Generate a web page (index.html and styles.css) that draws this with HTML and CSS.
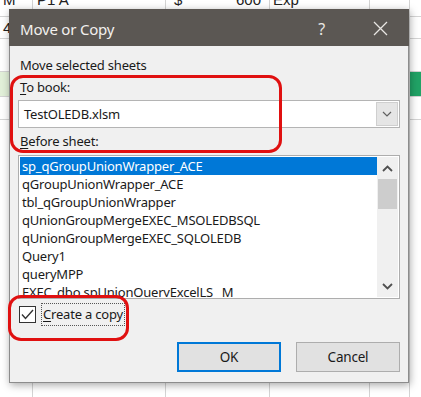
FILE: index.html
```html
<!DOCTYPE html>
<html lang="en">
<head>
    <meta charset="UTF-8">
    <title>Move or Copy</title>
    <link rel="stylesheet" href="styles.css">
</head>
<body>
    <div class="sheet">
        <div class="row row-first">
            <div class="cell c1">M</div>
            <div class="cell c2">P1 A</div>
            <div class="cell c3"><span>$</span><span>600</span></div>
            <div class="cell c4">Exp</div>
            <div class="cell c5"></div>
            <div class="cell c6"></div>
        </div>
        <div class="row row-2">
            <div class="cell c1">4-3</div>
            <div class="cell c2"></div>
            <div class="cell c3"></div>
            <div class="cell c4"></div>
            <div class="cell c5"></div>
            <div class="cell c6"></div>
        </div>
        <div class="row row-3">
            <div class="cell c1"></div>
            <div class="cell c2"></div>
            <div class="cell c3"></div>
            <div class="cell c4"></div>
            <div class="cell c5"></div>
            <div class="cell c6"></div>
        </div>
        <div class="row row-4">
            <div class="cell c1 green-light"></div>
            <div class="cell c2"></div>
            <div class="cell c3"></div>
            <div class="cell c4"></div>
            <div class="cell c5"></div>
            <div class="cell c6 green"></div>
        </div>
        <div class="row row-5">
            <div class="cell c1"></div>
            <div class="cell c2"></div>
            <div class="cell c3"></div>
            <div class="cell c4"></div>
            <div class="cell c5"></div>
            <div class="cell c6"></div>
        </div>
        <div class="row row-6">
            <div class="cell c1"></div>
            <div class="cell c2"></div>
            <div class="cell c3"></div>
            <div class="cell c4"></div>
            <div class="cell c5"></div>
            <div class="cell c6"></div>
        </div>
    </div>

    <div class="dialog">
        <div class="titlebar">
            <span class="title">Move or Copy</span>
            <span class="help">?</span>
            <svg class="close" width="15" height="15" viewBox="0 0 15 15">
                <path d="M1 1 L14 14 M14 1 L1 14" stroke="#e8e6e3" stroke-width="1.3" fill="none"/>
            </svg>
        </div>
        <div class="body">
            <div class="label">Move selected sheets</div>
            <div class="label"><u>T</u>o book:</div>
            <div class="combo">
                <span class="combo-text">TestOLEDB.xlsm</span>
                <div class="combo-btn">
                    <svg width="10" height="6" viewBox="0 0 10 6">
                        <path d="M1 1 L5 5 L9 1" stroke="#606060" stroke-width="1.2" fill="none"/>
                    </svg>
                </div>
            </div>
            <div class="label label-before"><u>B</u>efore sheet:</div>
            <div class="listbox">
                <ul class="items">
                    <li class="selected">sp_qGroupUnionWrapper_ACE</li>
                    <li>qGroupUnionWrapper_ACE</li>
                    <li>tbl_qGroupUnionWrapper</li>
                    <li>qUnionGroupMergeEXEC_MSOLEDBSQL</li>
                    <li>qUnionGroupMergeEXEC_SQLOLEDB</li>
                    <li>Query1</li>
                    <li>queryMPP</li>
                    <li>EXEC_dbo.spUnionQueryExcelLS_ M</li>
                </ul>
                <div class="scrollbar">
                    <div class="arrow">
                        <svg width="11" height="7" viewBox="0 0 11 7">
                            <path d="M1 6 L5.5 1.5 L10 6" stroke="#505050" stroke-width="1.8" fill="none"/>
                        </svg>
                    </div>
                    <div class="track">
                        <div class="thumb"></div>
                    </div>
                    <div class="arrow">
                        <svg width="11" height="7" viewBox="0 0 11 7">
                            <path d="M1 1 L5.5 5.5 L10 1" stroke="#505050" stroke-width="1.8" fill="none"/>
                        </svg>
                    </div>
                </div>
            </div>
            <div class="check-row">
                <div class="checkbox">
                    <svg width="13" height="11" viewBox="0 0 13 11">
                        <path d="M1 5.5 L4.5 9.5 L12 1" stroke="#333" stroke-width="1.4" fill="none"/>
                    </svg>
                </div>
                <span class="check-label"><u>C</u>reate a copy</span>
            </div>
            <div class="buttons">
                <button class="btn btn-default">OK</button>
                <button class="btn">Cancel</button>
            </div>
        </div>
        <div class="mark mark-book"></div>
        <div class="mark mark-copy"></div>
    </div>
</body>
</html>
```

FILE: styles.css
```css
body {
    margin: 0;
    background: #ffffff;
    font-family: 'Noto Sans', 'Open Sans', sans-serif;
    width: 421px;
    height: 397px;
    overflow: hidden;
    position: relative;
}

.sheet {
    font-family: 'Liberation Sans', sans-serif;
    font-size: 15px;
    color: #222;
}

.row {
    display: flex;
    border-bottom: 1px solid #d4d4d4;
    box-sizing: border-box;
}

.row-first { height: 17px; }
.row-2 { height: 22px; }
.row-3 { height: 33px; }
.row-4 { height: 25px; }
.row-5 { height: 23px; }
.row-6 { height: 277px; border-bottom: none; }

.cell {
    border-right: 1px solid #d4d4d4;
    box-sizing: border-box;
    height: 100%;
    padding: 0 3px;
    line-height: 22px;
    overflow: hidden;
    white-space: nowrap;
}

.row-first .cell {
    line-height: 0px;
}

.c1 { width: 33px; }
.c2 { width: 133px; padding-left: 4px; }
.c3 { width: 104px; display: flex; justify-content: space-between; padding: 0 8px; }
.c4 { width: 100px; }
.c5 { width: 40px; }
.c6 { width: 11px; border-right: none; }

.green { background: #21a366; }
.green-light { background: #e2f0d9; }

.dialog {
    position: absolute;
    left: 9px;
    top: 9px;
    width: 400px;
    height: 374px;
    background: #f0f0f0;
    box-shadow: 1px 2px 8px rgba(0, 0, 0, 0.35);
    border: 1px solid #8c8c8c;
    border-top: none;
    box-sizing: border-box;
    letter-spacing: -0.2px;
}

.titlebar {
    height: 37px;
    background: #5b5753;
    display: flex;
    align-items: center;
    padding-left: 11px;
    margin: 0 -1px;
}

.title {
    color: #f2f0ee;
    font-size: 15px;
    flex-grow: 1;
    padding-top: 2px;
}

.help {
    color: #e8e6e3;
    font-size: 16px;
    margin-right: 48px;
    padding-top: 2px;
}

.close {
    margin-right: 21px;
    margin-top: 2px;
}

.body {
    padding: 10px 8px 0 8px;
    font-size: 13px;
    color: #1a1a1a;
}

.label {
    line-height: 18px;
    height: 18px;
    margin-bottom: 4px;
    padding-left: 2px;
}

.label u, .check-label u {
    text-decoration-thickness: 1px;
    text-underline-offset: 2px;
}

.label-before {
    margin-top: 4px;
    margin-bottom: 5px;
}

.combo {
    height: 28px;
    background: #ffffff;
    border: 1px solid #b4b4b4;
    box-sizing: border-box;
    display: flex;
    align-items: center;
    padding: 1px;
}

.combo-text {
    flex-grow: 1;
    padding-left: 4px;
}

.combo-btn {
    width: 22px;
    height: 24px;
    background: #e5e5e5;
    border: 1px solid #cfcfcf;
    box-sizing: border-box;
    display: flex;
    align-items: center;
    justify-content: center;
}

.listbox {
    height: 144px;
    background: #ffffff;
    border: 1px solid #adadad;
    box-sizing: border-box;
    display: flex;
    padding: 1px;
    overflow: hidden;
}

.items {
    list-style: none;
    margin: 0;
    padding: 0;
    flex-grow: 1;
    overflow: hidden;
}

.items li {
    height: 18px;
    line-height: 18px;
    padding-left: 2px;
    white-space: nowrap;
}

.items li.selected {
    background: #0078d7;
    color: #ffffff;
}

.scrollbar {
    width: 21px;
    display: flex;
    flex-direction: column;
    background: #f0f0f0;
}

.arrow {
    height: 22px;
    display: flex;
    align-items: center;
    justify-content: center;
}

.track {
    flex-grow: 1;
}

.thumb {
    height: 30px;
    background: #cdcdcd;
    margin: 0 1px;
}

.check-row {
    display: flex;
    align-items: center;
    margin-top: 3px;
    height: 24px;
}

.checkbox {
    width: 15px;
    height: 15px;
    border: 1px solid #333;
    background: #ffffff;
    margin-left: 1px;
    display: flex;
    align-items: center;
    justify-content: center;
}

.check-label {
    margin-left: 5px;
    border: 1px dotted #555;
    padding: 1px 1px 2px 1px;
    line-height: 18px;
}

.buttons {
    display: flex;
    justify-content: flex-end;
    gap: 15px;
    margin-top: 16px;
}

.btn {
    width: 104px;
    height: 30px;
    background: #e1e1e1;
    border: 1px solid #adadad;
    font-family: 'Noto Sans', 'Open Sans', sans-serif;
    font-size: 13.5px;
    letter-spacing: -0.2px;
    color: #1a1a1a;
    padding: 0;
}

.btn-default {
    border: 2px solid #0078d7;
}

.mark {
    position: absolute;
    border: 3px solid #e01010;
    border-radius: 13px;
    box-sizing: border-box;
}

.mark-book {
    left: 0px;
    top: 66px;
    width: 272px;
    height: 78px;
}

.mark-copy {
    left: -2px;
    top: 286px;
    width: 121px;
    height: 46px;
}
```
